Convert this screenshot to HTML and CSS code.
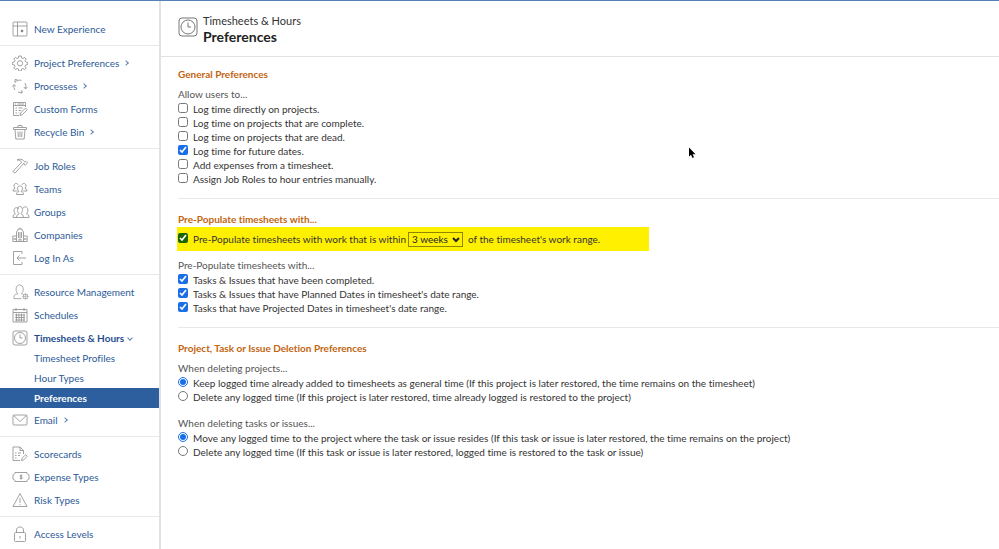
FILE: index.html
```html
<!DOCTYPE html>
<html lang="en">
<head>
  <meta charset="UTF-8">
  <meta name="viewport" content="width=device-width, initial-scale=1.0">
  <title>Timesheets &amp; Hours Preferences</title>
  <link rel="stylesheet" href="styles.css">
</head>
<body>

  <!-- Setup navigation -->
  <nav class="sidebar">
    <ul class="nav-group">
      <li><a href="#"><svg class="icon" viewBox="0 0 16 16"><rect x="1" y="1" width="14" height="14" rx="1"/><path d="M1 5h14M5.500 1v14"/><circle class="dot" cx="10" cy="10" r="1"/></svg>New Experience</a></li>
    </ul>

    <ul class="nav-group">
      <li><a href="#"><svg class="icon" viewBox="0 0 16 16"><path d="M6.800 1h2.400l.4 2 1.300.6 1.800-1.200 1.500 1.600-1.100 1.700.5 1.300 2 .4v2.200l-2 .4-.6 1.400 1.200 1.700-1.600 1.500-1.700-1.100-1.300.5-.4 2H6.800l-.4-2-1.300-.6-1.800 1.200L1.800 13l1.100-1.700-.5-1.400-2-.4V7.300l2-.4.6-1.300-1.200-1.700 1.600-1.500 1.700 1.100 1.300-.5z"/><circle cx="8" cy="8.300" r="2.600"/></svg>Project Preferences<span class="chevron"></span></a></li>
      <li><a href="#"><svg class="icon" viewBox="0 0 16 16"><path d="M3 4.500C4.500 2.500 7 1.700 9.500 2.300M5.500 1.800L3 1.500M3 4.500V1.700M13 5a6 6 0 0 1 .5 5.500M15.500 9l-2 2-1.700-2M10 14a6 6 0 0 1-4 .2M9.500 12.200l1 2-2 1.500M3 12A6 6 0 0 1 2 7M.5 8.500L2 6.500l1.800 1.700"/></svg>Processes<span class="chevron"></span></a></li>
      <li><a href="#"><svg class="icon" viewBox="0 0 16 16"><path d="M7 14.500H1.500v-13h12V6M1.500 4.500h12M3 3h1M5.500 3h6.500M3.500 7h1.500M6.500 7h4M3.500 9.500h1.500M6.500 9.500h2.500M3.500 12h1.500M8 14.500l.6-2.500 4.900-5 1.700 1.700-4.900 5zM6.500 12h1"/></svg>Custom Forms</a></li>
      <li><a href="#"><svg class="icon" viewBox="0 0 16 16"><path d="M1.500 3.500h13v2h-13zM5.500 3.500l.7-2h3.600l.7 2M3 5.500l.8 9.500h8.400L13 5.500M6 7.500l.3 5.500M8 7.500V13M10 7.500L9.700 13"/></svg>Recycle Bin<span class="chevron"></span></a></li>
    </ul>

    <ul class="nav-group">
      <li><a href="#"><svg class="icon" viewBox="0 0 16 16"><path d="M5 2c3-1.500 5-.8 6.500.5l1.200 1.300 1.500-.3 1.300 1.500-2.300 2.300L12 6.200l.1-1.200L3 15.200.9 13.500 9.800 4C8.500 2.500 7 2 5 2z"/></svg>Job Roles</a></li>
      <li><a href="#"><svg class="icon" viewBox="0 0 16 16"><path d="M4.500 13.500c0-2 .6-2.500 2.300-3C6 9.500 5.500 8.500 5.500 7.200c0-3 5-3 5 0 0 1.300-.5 2.300-1.300 3.300 1.700.5 2.300 1 2.300 3zM4.800 10H1c0-1.700.5-2 2-2.500-.8-1-1-1.700-1-2.700 0-3 3.500-3 4.200-.8M11.200 10H15c0-1.700-.5-2-2-2.500.8-1 1-1.700 1-2.700 0-3-3.500-3-4.200-.8"/></svg>Teams</a></li>
      <li><a href="#"><svg class="icon wide" viewBox="0 0 18 16"><path d="M5 13.500H1c0-2.500.5-3 2.300-3.500C2.500 9 2 8 2 6.500 2 3 6 3 6.800 5M4.500 13.500c0-2 .8-3 2.700-3.700C5.800 8.500 5.500 7 5.500 5.500c0-4 4.500-4 5 0 0 1.500-.5 3-1.500 4.200 1.500.4 2.300 1.300 2.300 3.800zM11.300 13.500H17c0-2.500-.7-3-2.500-3.500.8-1 1.300-2 1.300-4.200 0-3.500-4-3.800-5-1.300"/></svg>Groups</a></li>
      <li><a href="#"><svg class="icon" viewBox="0 0 16 16"><path d="M.8 14.500V9h3.700V4.500l1.500-1V2h4v1.500l1.500 1V9h3.700v5.500zM8 .5V2M4.500 9v5.500M11.500 9v5.500M6.500 5v6M8 5v6M9.500 5v6M2 11v2M3.300 11v2M12.700 11v2M14 11v2M7 14.500V12h2v2.500"/></svg>Companies</a></li>
      <li><a href="#"><svg class="icon" viewBox="0 0 16 16"><path d="M10 4V1.500H1.500v13H10V12M14 8H5M7.500 5.500L5 8l2.500 2.500"/></svg>Log In As</a></li>
    </ul>

    <ul class="nav-group">
      <li><a href="#"><svg class="icon wide" viewBox="0 0 18 18"><path d="M9.500 16.500H1c0-4 .5-4.500 4.500-5.500C4 9.500 3.500 8 3.500 5.500c0-6 8-6 8 0 0 2.500-.5 4-2 5.500l1.500.5"/><circle cx="14" cy="14" r="2.500"/><circle cx="14" cy="14" r=".8"/><path d="M14 10.500v1M14 16.500v1M10.500 14h1M16.500 14h1M11.500 11.500l.7.700M16.500 11.500l-.7.700M11.500 16.500l.7-.7M16.500 16.500l-.7-.7"/></svg>Resource Management</a></li>
      <li><a href="#"><svg class="icon" viewBox="0 0 16 16"><path d="M1 2.500h14v12.500H1zM1 5.500h14M4 1v3M12 1v3M3 8h10M3 10.500h10M3 13h10M4.500 6.500v8M7 6.500v8M9.500 6.500v8M12 6.500v8"/></svg>Schedules</a></li>
      <li>
        <a class="open" href="#"><svg class="icon" viewBox="0 0 16 16"><rect x="1" y="1" width="14" height="14" rx="2"/><circle cx="8" cy="8" r="5.500"/><path d="M8 4.500V8h2.500"/></svg>Timesheets &amp; Hours<span class="chevron down"></span></a>
        <ul class="sub-nav">
          <li><a href="#">Timesheet Profiles</a></li>
          <li><a href="#">Hour Types</a></li>
          <li><a class="current" href="#">Preferences</a></li>
        </ul>
      </li>
      <li><a href="#"><svg class="icon" viewBox="0 0 16 16"><rect x="1" y="3" width="14" height="10" rx="1"/><path d="M1.500 3.500L8 9.500l6.500-6"/></svg>Email<span class="chevron"></span></a></li>
    </ul>

    <ul class="nav-group">
      <li><a href="#"><svg class="icon" viewBox="0 0 16 16"><path d="M8 14.500H1V1h7l3.500 3.500V8M8 1v3.500h3.500M3 7h1.500M6 7h3M3 9.500h1.500M6 9.500h2M3 12h1.500M9.500 14.500l.5-2.200 3.700-3.600 1.600 1.600-3.600 3.600z"/></svg>Scorecards</a></li>
      <li><a href="#"><svg class="icon wide" viewBox="0 0 18 16"><path d="M3 3.500h12c0 1.500.7 2 2 2.300v4.400c-1.300.3-2 .8-2 2.300H3c0-1.500-.7-2-2-2.300V5.800c1.300-.3 2-.8 2-2.300zM10.300 6.500H8.700a.8.800 0 0 0 0 1.500h.8a.8.800 0 0 1 0 1.600H7.800M9 5.500v5"/></svg>Expense Types</a></li>
      <li><a href="#"><svg class="icon" viewBox="0 0 16 16"><path d="M8 1.500L15 14.500H1zM8 6v5M8 12.200v1"/></svg>Risk Types</a></li>
    </ul>

    <ul class="nav-group">
      <li><a href="#"><svg class="icon" viewBox="0 0 16 16"><rect x="2.500" y="6.500" width="11" height="9" rx="1"/><path d="M4.500 6.500V4c0-4 7-4 7 0v2.500M8 10v2.500"/></svg>Access Levels</a></li>
    </ul>
  </nav>

  <main class="content">
    <header class="page-header">
      <svg class="header-icon" viewBox="0 0 20 20"><rect x="1" y="1" width="18" height="18" rx="3"/><circle cx="10" cy="10" r="7"/><path d="M10 5.500V10h3"/></svg>
      <h1><span>Timesheets &amp; Hours</span>Preferences</h1>
    </header>

    <form class="preferences">
      <section>
        <h2>General Preferences</h2>
        <fieldset>
          <legend>Allow users to...</legend>
          <label><input type="checkbox">Log time directly on projects.</label>
          <label><input type="checkbox">Log time on projects that are complete.</label>
          <label><input type="checkbox">Log time on projects that are dead.</label>
          <label><input type="checkbox" checked>Log time for future dates.</label>
          <label><input type="checkbox">Add expenses from a timesheet.</label>
          <label><input type="checkbox">Assign Job Roles to hour entries manually.</label>
        </fieldset>
      </section>

      <section>
        <h2 class="tight">Pre-Populate timesheets with...</h2>
        <div class="highlight">
          <label for="within"><input type="checkbox" id="within" checked>Pre-Populate timesheets with work that is within</label>
          <div class="select">
            <select id="range">
              <option>1 week</option>
              <option>2 weeks</option>
              <option selected>3 weeks</option>
              <option>4 weeks</option>
            </select>
            <svg viewBox="0 0 8 6"><path d="M1 1l3 3 3-3"/></svg>
          </div>
          <label for="range">of the timesheet's work range.</label>
        </div>
        <fieldset>
          <legend>Pre-Populate timesheets with...</legend>
          <label><input type="checkbox" checked>Tasks &amp; Issues that have been completed.</label>
          <label><input type="checkbox" checked>Tasks &amp; Issues that have Planned Dates in timesheet's date range.</label>
          <label><input type="checkbox" checked>Tasks that have Projected Dates in timesheet's date range.</label>
        </fieldset>
      </section>

      <section>
        <h2>Project, Task or Issue Deletion Preferences</h2>
        <fieldset>
          <legend>When deleting projects...</legend>
          <label><input type="radio" name="projects" checked>Keep logged time already added to timesheets as general time (If this project is later restored, the time remains on the timesheet)</label>
          <label><input type="radio" name="projects">Delete any logged time (If this project is later restored, time already logged is restored to the project)</label>
        </fieldset>
        <fieldset>
          <legend>When deleting tasks or issues...</legend>
          <label><input type="radio" name="tasks" checked>Move any logged time to the project where the task or issue resides (If this task or issue is later restored, the time remains on the project)</label>
          <label><input type="radio" name="tasks">Delete any logged time (If this task or issue is later restored, logged time is restored to the task or issue)</label>
        </fieldset>
      </section>
    </form>
  </main>

  <svg class="pointer" viewBox="0 0 8 12"><path d="M1 .5v9l2-1.800L4.500 11l1.500-.7-1.400-3H7.500z"/></svg>

</body>
</html>
```

FILE: styles.css
```css
/* General Styling */
* {
  box-sizing: border-box;
}

body {
  display: flex;
  min-height: 100vh;
  margin: 0;
  border-top: 1px solid #5580b5;
  background: #fff;
  color: #333;
  font-family: Lato, sans-serif;
  font-size: 10px;
  font-variant-ligatures: none;
}

ul {
  margin: 0;
  padding: 0;
  list-style: none;
}

/* Sidebar */
.sidebar {
  flex: 0 0 161px;
  padding-top: 11px;
  border-right: 2px solid #e2e2e2;
}

.nav-group {
  padding: 5px 0;
  border-bottom: 1px solid #e8e8e8;
}

.nav-group:last-child {
  padding-bottom: 0;
  border-bottom: none;
}

.nav-group a {
  display: flex;
  align-items: center;
  height: 23px;
  padding-left: 12px;
  color: #2c5a97;
  text-decoration: none;
}

.nav-group .open {
  color: #1f4c8f;
  font-weight: bold;
}

.icon {
  width: 16px;
  height: 16px;
  margin-right: 6px;
  fill: none;
  stroke: #8a8a8a;
  stroke-width: 0.8;
}

.icon.wide {
  width: 18px;
  margin-right: 4px;
}

.icon .dot {
  fill: #555;
}

.chevron {
  width: 4px;
  height: 4px;
  margin-left: 5px;
  border: solid #5f81ae;
  border-width: 1px 1px 0 0;
  transform: rotate(45deg);
}

.chevron.down {
  margin-left: 4px;
  transform: rotate(135deg);
}

.nav-group .sub-nav {
  margin-top: -1px;
}

.nav-group .sub-nav a {
  height: 20px;
  padding-left: 34px;
}

.nav-group .sub-nav .current {
  background: #2d5f9f;
  color: #fff;
  font-weight: bold;
}

/* Page Header */
.content {
  flex: 1;
  min-width: 0;
}

.page-header {
  display: flex;
  gap: 5px;
  padding: 12px 17px 11px;
  border-bottom: 1px solid #e2e2e2;
}

.header-icon {
  width: 20px;
  height: 20px;
  margin-top: 4px;
  fill: none;
  stroke: #777;
}

.page-header h1 {
  margin: 0;
  color: #222;
  font-size: 14px;
  line-height: 16px;
}

.page-header h1 span {
  display: block;
  color: #333;
  font-size: 11px;
  font-weight: normal;
}

/* Preferences Form */
.preferences {
  padding-left: 17px;
}

section {
  padding: 13px 0 12px;
  border-bottom: 1px solid #e8e8e8;
}

section:first-child {
  padding-top: 10px;
}

section:last-child {
  border-bottom: none;
}

section h2 {
  margin: 0 0 5px;
  color: #c26410;
  font-size: 10px;
  line-height: 14px;
}

section h2.tight {
  margin-bottom: 1px;
}

fieldset {
  margin: 0;
  padding: 0;
  border: none;
}

fieldset + fieldset {
  margin-top: 11px;
}

legend {
  padding: 0;
  color: #555;
  line-height: 16px;
}

label {
  display: flex;
  align-items: center;
  line-height: 14px;
}

input {
  width: 10px;
  height: 10px;
  margin: 0 5px 2px 0;
  accent-color: #1a6fe8;
}

.highlight {
  display: flex;
  align-items: center;
  width: 472px;
  max-width: 100%;
  height: 24px;
  margin: 0 0 6px -1px;
  padding-left: 1px;
  background: #fff000;
}

.highlight input {
  accent-color: #1c6400;
}

.select {
  position: relative;
  display: flex;
  margin: 0 5px 0 2px;
}

.select select {
  height: 15px;
  padding: 0 13px 0 3px;
  border: 1px solid #8f8600;
  border-radius: 0;
  background: transparent;
  color: #222;
  font-family: Lato, sans-serif;
  font-size: 10px;
  appearance: none;
}

.select svg {
  position: absolute;
  top: 5px;
  right: 3px;
  width: 8px;
  height: 6px;
  fill: none;
  stroke: #222;
  stroke-width: 2;
  pointer-events: none;
}

/* Mouse pointer over the page */
.pointer {
  position: absolute;
  top: 147px;
  left: 688px;
  width: 8px;
  height: 12px;
}
```
